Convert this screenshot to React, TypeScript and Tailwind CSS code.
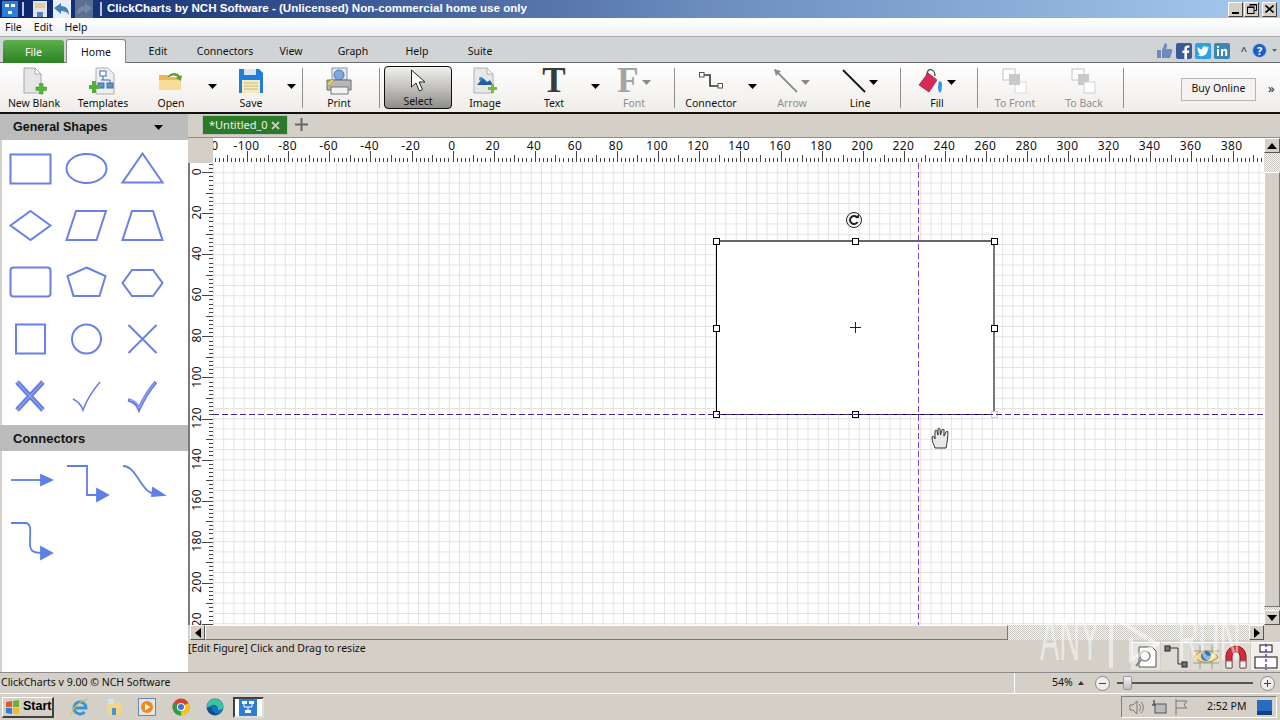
import React from 'react';

// Small toolbar glyphs
const Caret = ({ muted = false }: { muted?: boolean }) => (
  <svg width="9" height="5" viewBox="0 0 9 5">
    <path d="M0 0h9L4.500 5z" fill={muted ? '#8a8a8a' : '#000'} />
  </svg>
);

const IconDoc = () => (
  <svg width="26" height="28" viewBox="0 0 26 28">
    <path d="M3 1h11l6 6v19H3z" fill="#e6e6e6" stroke="#a8a8a8" />
    <path d="M14 1v6h6z" fill="#fff" stroke="#a8a8a8" />
    <path d="M15 20h3.500v-3.500h3.500V20h3.500v3.500H22V27h-3.500v-3.500H15z" fill="#55b53a" stroke="#2e8a1d" strokeWidth="0.5" />
  </svg>
);

const IconTemplates = () => (
  <svg width="28" height="28" viewBox="0 0 28 28">
    <path d="M7 1h12l6 6v20H7z" fill="#eee" stroke="#b0b0b0" />
    <rect x="11" y="4" width="6" height="5" fill="#fff" stroke="#3f6fa8" />
    <rect x="9" y="16" width="6" height="5" fill="#5d93c9" stroke="#3f6fa8" />
    <rect x="18" y="16" width="6" height="5" fill="#5d93c9" stroke="#3f6fa8" />
    <path d="M14 9v4M12 13h9v3" fill="none" stroke="#3f6fa8" />
    <path d="M0 18h3v-4h4v4h3v4H7v4H3v-4H0z" fill="#4fb035" />
  </svg>
);

const IconOpen = () => (
  <svg width="26" height="22" viewBox="0 0 26 22">
    <path d="M1 5h8l2 2h12v13H1z" fill="#eeb755" />
    <path d="M1 10h22v10H1z" fill="#f9dc97" />
    <path d="M9 7c4-5 10-5 13-1l2-1-1 6-5-3 2-1c-3-2-6-2-9 0z" fill="#5e9e2b" />
  </svg>
);

const IconSave = () => (
  <svg width="24" height="24" viewBox="0 0 24 24">
    <path d="M0 0h20l4 4v20H0z" fill="#1f7fd8" />
    <rect x="5" y="0" width="12" height="6" fill="#d6e7f7" />
    <rect x="3" y="11" width="18" height="13" fill="#f7e9bd" />
    <path d="M5 14h14M5 17h14M5 20h14" stroke="#c9b98a" />
  </svg>
);

const IconPrint = () => (
  <svg width="26" height="28" viewBox="0 0 26 28">
    <rect x="6" y="1" width="15" height="12" fill="#e4e8f0" stroke="#8a93a5" />
    <circle cx="13" cy="8" r="5" fill="#7ea8dc" stroke="#4e76ad" />
    <path d="M1 13h24v10H1z" fill="#b7b7b7" stroke="#6d6d6d" />
    <rect x="5" y="20" width="17" height="7" fill="#f3f3f3" stroke="#777" />
    <path d="M1 17l5-5 2 2-5 5z" fill="#e8d25a" stroke="#a08f2e" strokeWidth="0.5" />
  </svg>
);

const IconPointer = () => (
  <svg width="16" height="24" viewBox="0 0 16 24">
    <path d="M1.500 1v17l4.500-4 3.500 8 3-1.500-3.500-7.500h6z" fill="#fff" stroke="#222" strokeWidth="1" />
  </svg>
);

const IconImage = () => (
  <svg width="26" height="28" viewBox="0 0 26 28">
    <path d="M2 1h13l6 6v19H2z" fill="#e8e8e8" stroke="#b0b0b0" />
    <path d="M15 1v6h6z" fill="#fff" stroke="#b0b0b0" />
    <path d="M5 18l6-7 4 4 3-2 3 5z" fill="#1f5fa8" />
    <circle cx="9" cy="12" r="2" fill="#3b86d0" />
    <path d="M16 20h3v-3h3v3h3v3h-3v3h-3v-3h-3z" fill="#6fc238" />
  </svg>
);

const IconSerif = ({ letter, disabled }: { letter: string; disabled?: boolean }) => (
  <span
    className={`block h-[28px] overflow-hidden font-['Liberation_Serif',serif] font-bold text-[35px] leading-[28px] ${disabled ? 'text-[#a4a4a4]' : 'text-[#3a3a3a]'}`}
  >
    {letter}
  </span>
);

const IconConnector = () => (
  <svg width="26" height="22" viewBox="0 0 26 22">
    <path d="M6 5h6v11h8" fill="none" stroke="#333" strokeWidth="1.600" />
    <rect x="1.500" y="2.500" width="4.500" height="4.500" fill="#fff" stroke="#555" />
    <rect x="20" y="13.500" width="4.500" height="4.500" fill="#fff" stroke="#555" />
  </svg>
);

const IconLine = ({ color, head }: { color: string; head?: boolean }) => (
  <svg width="24" height="24" viewBox="0 0 24 24">
    <path d="M1 1l22 22" stroke={color} strokeWidth="1.800" />
    {head && <path d="M0 0l7 2-5 5z" fill={color} />}
  </svg>
);

const IconFill = () => (
  <svg width="26" height="26" viewBox="0 0 26 26">
    <path d="M9 8c-1-9 8-8 8 0" fill="none" stroke="#555" strokeWidth="1.500" />
    <path d="M10 5l9 7-8 12-10-7z" fill="#d62a58" stroke="#8d1537" strokeWidth="0.7" />
    <path d="M21 13c2 0 3 1 3 4 0 4-1 7-2 8-2-2-2-4-2-7z" fill="#2a9be0" />
  </svg>
);

const IconStack = ({ back }: { back?: boolean }) => (
  <svg width="26" height="26" viewBox="0 0 26 26">
    <rect x="1" y="1" width="12" height="11" fill="#fff" stroke="#c4c4c4" />
    {back ? (
      <>
        <rect x="7" y="6" width="11" height="11" fill="#c9c9c9" />
        <rect x="13" y="14" width="11" height="11" fill="#fff" stroke="#cfcfcf" />
      </>
    ) : (
      <>
        <rect x="13" y="14" width="11" height="11" fill="#fff" stroke="#dadada" />
        <rect x="7" y="6" width="11" height="11" fill="#c9c9c9" />
      </>
    )}
  </svg>
);

interface ToolItem {
  label?: string;
  icon?: React.ReactNode;
  width: string;
  disabled?: boolean;
  kind?: 'tool' | 'caret' | 'sep';
  inlineCaret?: boolean;
  active?: boolean;
}

const tools: ToolItem[] = [
  { label: 'New Blank', icon: <IconDoc />, width: 'w-[68px]' },
  { label: 'Templates', icon: <IconTemplates />, width: 'w-[70px]' },
  { label: 'Open', icon: <IconOpen />, width: 'w-[66px]' },
  { kind: 'caret', width: 'w-[16px]' },
  { label: 'Save', icon: <IconSave />, width: 'w-[62px]' },
  { kind: 'caret', width: 'w-[19px]' },
  { kind: 'sep', width: 'w-[3px]' },
  { label: 'Print', icon: <IconPrint />, width: 'w-[70px]' },
  { kind: 'sep', width: 'w-[10px]' },
  { label: 'Select', icon: <IconPointer />, width: 'w-[68px]', active: true },
  { label: 'Image', icon: <IconImage />, width: 'w-[66px]' },
  { label: 'Text', icon: <IconSerif letter="T" />, width: 'w-[72px]' },
  { kind: 'caret', width: 'w-[10px]' },
  { label: 'Font', icon: <IconSerif letter="F" disabled />, width: 'w-[68px]', disabled: true, inlineCaret: true },
  { kind: 'sep', width: 'w-[12px]' },
  { label: 'Connector', icon: <IconConnector />, width: 'w-[62px]' },
  { kind: 'caret', width: 'w-[20px]' },
  { label: 'Arrow', icon: <IconLine color="#8d8d8d" head />, width: 'w-[60px]', disabled: true, inlineCaret: true },
  { label: 'Line', icon: <IconLine color="#111" />, width: 'w-[76px]', inlineCaret: true },
  { kind: 'sep', width: 'w-[5px]' },
  { label: 'Fill', icon: <IconFill />, width: 'w-[68px]', inlineCaret: true },
  { kind: 'sep', width: 'w-[12px]' },
  { label: 'To Front', icon: <IconStack />, width: 'w-[64px]', disabled: true },
  { label: 'To Back', icon: <IconStack back />, width: 'w-[74px]', disabled: true },
  { kind: 'sep', width: 'w-[5px]' },
];

const tabs = [
  { label: 'Edit', width: 'w-[64px]' },
  { label: 'Connectors', width: 'w-[70px]' },
  { label: 'View', width: 'w-[62px]' },
  { label: 'Graph', width: 'w-[62px]' },
  { label: 'Help', width: 'w-[66px]' },
  { label: 'Suite', width: 'w-[60px]' },
];

const hLabels = [-120, -100, -80, -60, -40, -20, 0, 20, 40, 60, 80, 100, 120, 140, 160, 180, 200, 220, 240, 260, 280, 300, 320, 340, 360, 380];
const vLabels = [0, 20, 40, 60, 80, 100, 120, 140, 160, 180, 200, 220];

const STEP = 4.105;

const HRuler = () => (
  <div className="relative h-[25px] bg-white overflow-hidden flex-none">
    <div className="flex -ml-[28px] text-[12px] leading-[14px] pt-[1px] text-[#111] tracking-[0.4px]">
      {hLabels.map(n => (
        <div key={n} className="w-[41.05px] flex-none flex justify-center">
          {n}
        </div>
      ))}
    </div>
    <svg className="absolute left-0 bottom-[1px]" width="1052" height="12">
      {Array.from({ length: 257 }, (_, i) => {
        const h = i % 10 === 8 ? 11 : i % 10 === 3 ? 7 : 4;
        const x = Math.round(i * STEP + 1.5) + 0.5;
        return <line key={i} x1={x} x2={x} y1={12 - h} y2={12} stroke="#444" />;
      })}
    </svg>
  </div>
);

const VRuler = () => (
  <div className="relative w-[23px] h-full bg-white overflow-hidden flex-none">
    <div className="flex flex-col -mt-[12px] text-[12px] text-[#111] tracking-[0.4px]">
      {vLabels.map(n => (
        <div key={n} className="h-[41.05px] flex-none flex items-center justify-start">
          <span className="[writing-mode:vertical-rl] rotate-180 leading-[14px]">{n}</span>
        </div>
      ))}
    </div>
    <svg className="absolute right-0 top-0" width="12" height="462">
      {Array.from({ length: 113 }, (_, i) => {
        const w = i % 10 === 2 ? 11 : i % 5 === 2 ? 7 : 4;
        const y = Math.round(i * STEP + 1) + 0.5;
        return <line key={i} x1={12 - w} x2={12} y1={y} y2={y} stroke="#444" />;
      })}
    </svg>
  </div>
);

const Handle = ({ className }: { className: string }) => (
  <div className={`absolute w-[7px] h-[7px] bg-white border border-black ${className}`} />
);

const SHAPE = '#6a80e4';

const ShapePalette = () => (
  <svg width="188" height="285" viewBox="0 1 188 285" fill="none" stroke={SHAPE} strokeWidth="2">
    <rect x="10.500" y="15.500" width="40" height="29" />
    <ellipse cx="86.500" cy="29.500" rx="20" ry="14.500" />
    <path d="M142.500 14.500l20 29h-40z" />
    <path d="M30.500 72l20 14.500-20 14.500-20-14.500z" />
    <path d="M76 72h30l-9.500 29h-30z" />
    <path d="M132 72h21l9.500 29h-40z" />
    <rect x="10.500" y="128.500" width="40" height="29" rx="3" />
    <path d="M86.500 128.500l19 8.500-6 20H73.500l-6-20z" />
    <path d="M132 131h21l9.500 13-9.500 13h-21l-9.500-13z" />
    <rect x="16" y="185.500" width="29" height="29" />
    <circle cx="86.500" cy="200" r="14.500" />
    <path d="M128.500 186l28 28M156.500 186l-28 28" />
    <path d="M17 243l26 28M43 243l-26 28" strokeWidth="5" />
    <path d="M17 243l26 28M43 243l-26 28" stroke="#9fb0ef" strokeWidth="1" />
    <path d="M73 260c4 2 8 5 10 11 4-11 10-20 17-28" strokeWidth="1.600" />
    <path d="M128 261c5 1 9 4 11 9 5-11 10-19 17-27" strokeWidth="3.500" />
    <path d="M130 261c5 1 8 4 9 8 5-10 10-18 16-25" stroke="#9fb0ef" strokeWidth="1" />
  </svg>
);

const ConnectorPalette = () => (
  <svg width="188" height="120" viewBox="0 0 188 120" fill="none" stroke="#5f7fe8" strokeWidth="1.800">
    <path d="M11 29h32" />
    <path d="M41 24l11 5-11 5z" fill="#5f7fe8" />
    <path d="M67 15h20v29h12" />
    <path d="M97 38l11 6-11 6z" fill="#5f7fe8" />
    <path d="M123 15c14 0 17 26 32 28" />
    <path d="M153 37l11 7-12 1z" fill="#5f7fe8" />
    <path d="M11 72h14c7 0 5 8 5 20 0 8 2 10 14 10" />
    <path d="M41 96l11 6-11 6z" fill="#5f7fe8" />
  </svg>
);

const ArrowBtn = ({ dir, className = '' }: { dir: 'u' | 'd' | 'l' | 'r'; className?: string }) => {
  const d = { u: 'M0 6L5 0l5 6z', d: 'M0 0h10L5 6z', l: 'M6 0v10L0 5z', r: 'M0 0v10l6-5z' }[dir];
  const box = dir === 'u' || dir === 'd' ? '0 0 10 6' : '0 0 6 10';
  return (
    <div
      className={`flex items-center justify-center bg-[#d4d0c8] border-t border-l border-t-white border-l-white border-r border-b border-r-[#555] border-b-[#555] ${className}`}
    >
      <svg width={dir === 'u' || dir === 'd' ? 10 : 6} height={dir === 'u' || dir === 'd' ? 6 : 10} viewBox={box}>
        <path d={d} fill="#000" />
      </svg>
    </div>
  );
};

const DITHER =
  '[background-image:repeating-conic-gradient(#c8c6c0_0_25%,#f6f6f3_0_50%)] [background-size:2px_2px]';

const Canvas = () => (
  <div className="relative flex-1 overflow-hidden bg-white [background-image:linear-gradient(#e2e2e2_1px,transparent_1px),linear-gradient(90deg,#e2e2e2_1px,transparent_1px)] [background-size:10.26px_10.26px] [background-position:0px_-1px]">
    {/* selected rectangle */}
    <div className="absolute left-[503px] top-[77px] w-[279px] h-[175px] bg-white border-l border-t-2 border-r-2 border-b border-l-black border-t-[#666] border-r-[#777] border-b-black" />
    <Handle className="left-[500px] top-[75px]" />
    <Handle className="left-[639px] top-[75px]" />
    <Handle className="left-[778px] top-[75px]" />
    <Handle className="left-[500px] top-[162px]" />
    <Handle className="left-[778px] top-[162px]" />
    <Handle className="left-[500px] top-[248px]" />
    <Handle className="left-[639px] top-[248px]" />
    <div className="absolute left-[778px] top-[248px] w-[7px] h-[7px] bg-white border border-[#f0d070]" />
    {/* guides */}
    <div className="absolute left-[705px] top-0 bottom-0 w-[1px] [background-image:linear-gradient(#7d45d0_0_6px,transparent_6px_9px)] [background-size:1px_9px]" />
    <div className="absolute left-0 right-0 top-[251px] h-[1px] [background-image:linear-gradient(90deg,#4a2298_0_6px,transparent_6px_9px)] [background-size:9px_1px]" />
    {/* centre cross, rotate handle, hand cursor */}
    <svg className="absolute left-[636px] top-[158px]" width="13" height="13">
      <path d="M6.500 1v11M1 6.500h11" stroke="#222" />
    </svg>
    <svg className="absolute left-[632px] top-[48px]" width="18" height="18" viewBox="0 0 18 18" fill="none" stroke="#222">
      <circle cx="9" cy="9" r="7.500" />
      <path d="M12.500 7a4 4 0 1 0 0 4" strokeWidth="2" />
      <path d="M10 7h4V3z" fill="#222" stroke="none" />
    </svg>
    <svg className="absolute left-[718px] top-[263px]" width="20" height="24" viewBox="0 0 20 24">
      <path
        d="M4 22c-1-3-3-6-3-11 0-1 2-1 2 0l1 2V5c0-1 2-1 2 0l1 4V3c0-1 2-1 2 0l.5 6L11 4c0-1 2-1 2 0l0 6 2-4c0-1 2-1 2 0 0 4-1 12-2 16z"
        fill="#e8e8e8"
        stroke="#333"
      />
    </svg>
  </div>
);

const TinyIcons = () => (
  <div className="flex items-center gap-[1px]">
    <div className="w-[29px] h-[28px] bg-[#e6e4df] flex items-center justify-center border-t border-white">
      <svg width="24" height="24" viewBox="0 0 24 24" fill="none">
        <path d="M5 2h13l4 4v16H5z" fill="#fff" stroke="#555" />
        <circle cx="11" cy="11" r="5" stroke="#888" strokeWidth="1.500" />
        <path d="M7 15l-5 6" stroke="#888" strokeWidth="2" />
      </svg>
    </div>
    <div className="w-[29px] h-[28px] bg-[#dedbd4] flex items-center justify-center border-t border-white">
      <svg width="26" height="24" viewBox="0 0 26 24" fill="none">
        <rect x="2" y="1" width="5" height="5" fill="#777" stroke="#222" />
        <rect x="19" y="17" width="5" height="5" fill="#777" stroke="#222" />
        <path d="M7 3h8v16h4" stroke="#333" />
      </svg>
    </div>
    <div className="w-[29px] h-[28px] bg-[#dedbd4] flex items-center justify-center border-t border-white">
      <svg width="26" height="24" viewBox="0 0 26 24" fill="none">
        <path d="M7 0v24M19 0v24M0 6h26M0 18h26" stroke="#9b9b8e" />
        <path d="M1 12c6-8 18-8 24 0-6 7-18 7-24 0z" fill="#f2dc88" stroke="#b08b30" />
        <circle cx="13" cy="11" r="5" fill="#2f6fc0" />
      </svg>
    </div>
    <div className="w-[29px] h-[28px] bg-[#dedbd4] flex items-center justify-center border-t border-white">
      <svg width="26" height="24" viewBox="0 0 26 24" fill="none">
        <path d="M3 23V11a10 10 0 0 1 20 0v12h-6V11a4 4 0 0 0-8 0v12z" fill="#d02c3a" stroke="#8e1a24" />
        <path d="M3 16h6v7H3zM17 16h6v7h-6z" fill="#eee" stroke="#777" />
      </svg>
    </div>
    <div className="w-[29px] h-[28px] bg-[#f1efea] flex items-center justify-center border-t border-white">
      <svg width="26" height="26" viewBox="0 0 26 26" fill="none">
        <rect x="7" y="1" width="12" height="7" fill="#fff" stroke="#111" />
        <rect x="2" y="13" width="22" height="11" fill="#fff" stroke="#111" />
        <path d="M13 0v26" stroke="#5b3bc4" strokeWidth="1.500" strokeDasharray="3 2" />
      </svg>
    </div>
  </div>
);

const TaskIcon = ({ children }: { children: React.ReactNode }) => (
  <div className="w-[33.800px] h-[24px] flex items-center justify-center flex-none">{children}</div>
);

const WinBtn = ({ children }: { children: React.ReactNode }) => (
  <div className="w-[15px] h-[15px] bg-[#d4d0c8] border-t border-l border-white border-r border-b border-r-[#404040] border-b-[#404040] flex items-center justify-center">
    {children}
  </div>
);

const App = () => {
  return (
    <div className="relative w-[1280px] h-[720px] overflow-hidden flex flex-col bg-[#d4d0c8] text-black text-[10.500px] font-['Noto_Sans','Liberation_Sans',sans-serif]">
      {/* title bar */}
      <div className="h-[18px] flex-none flex items-center bg-[linear-gradient(90deg,#0a246a,#6b8cbd_55%,#a6caf0)] text-white">
        <svg className="ml-[2px]" width="16" height="16" viewBox="0 0 16 16">
          <rect width="16" height="16" fill="#2d7fd3" />
          <path d="M3 3h4v3H3zM9 3h4v3H9zM6 10h4v3H6z" fill="#fff" />
        </svg>
        <div className="w-[2px] h-[14px] bg-[#b9c7de] ml-[4px]" />
        <svg className="ml-[8px]" width="16" height="18" viewBox="0 0 16 18">
          <rect x="1" y="1" width="14" height="16" fill="#dce6f2" />
          <rect x="3" y="3" width="10" height="5" fill="#f2c888" />
          <rect x="5" y="12" width="6" height="5" fill="#5a7fb0" />
        </svg>
        <div className="ml-[5px] w-[18px] h-[18px] bg-[#e8eef6] flex items-center justify-center">
          <svg width="18" height="14" viewBox="0 0 18 14">
            <path d="M1 6l7-5v3c5 0 8 3 8 9-2-3-4-4-8-4v3z" fill="#4a80b5" />
          </svg>
        </div>
        <div className="ml-[4px] w-[18px] h-[18px] bg-[#5a6f93] flex items-center justify-center">
          <svg width="18" height="14" viewBox="0 0 18 14">
            <path d="M17 6l-7-5v3C5 4 2 7 2 13c2-3 4-4 8-4v3z" fill="#7488a8" />
          </svg>
        </div>
        <div className="w-[2px] h-[14px] bg-[#b9c7de] ml-[7px]" />
        <span className="ml-[5px] -mt-[2px] font-bold text-[11.600px] leading-[18px] font-['Liberation_Sans',sans-serif]">
          ClickCharts by NCH Software - (Unlicensed) Non-commercial home use only
        </span>
        <div className="ml-auto mr-[3px] flex gap-[1px]">
          <WinBtn>
            <div className="w-[7px] h-[2px] bg-black mt-[7px] -ml-[1px]" />
          </WinBtn>
          <div className="mr-[2px]">
            <WinBtn>
              <svg width="10" height="10" viewBox="0 0 10 10" fill="none" stroke="#000">
                <path d="M3 2.500V.5h6.500v6H7.500" />
                <rect x="0.500" y="3" width="6.500" height="6.500" />
                <path d="M0.500 3.500h6.500M3 1h6.500" />
              </svg>
            </WinBtn>
          </div>
          <WinBtn>
            <svg width="9" height="8" viewBox="0 0 9 8" stroke="#000" strokeWidth="1.600">
              <path d="M.5.5l8 7M8.500.5l-8 7" />
            </svg>
          </WinBtn>
        </div>
      </div>

      {/* menu bar */}
      <div className="h-[19px] flex-none flex items-center gap-[12px] pl-[5px] pt-[2px] bg-[linear-gradient(#ffffff,#eef0f1)] border-b border-[#a9a9a9] text-[#111]">
        <span>File</span>
        <span>Edit</span>
        <span>Help</span>
      </div>

      {/* ribbon tabs */}
      <div className="h-[26px] flex-none flex items-end bg-[#d0d4d7] border-b border-[#6e6e6e] pl-[3px]">
        <div className="w-[61px] h-[23px] -mb-[1px] pt-[2px] rounded-t-[3px] bg-[linear-gradient(#5cb04c,#2c8323)] text-white flex items-center justify-center">
          File
        </div>
        <div className="ml-[2px] w-[60px] h-[24px] -mb-[1px] pt-[2px] rounded-t-[3px] bg-white border border-b-0 border-[#8a8a8a] flex items-center justify-center text-[#111]">
          Home
        </div>
        <div className="flex h-[23px] pt-[2px] items-center text-[#111]">
          {tabs.map(t => (
            <div key={t.label} className={`${t.width} flex justify-center`}>
              {t.label}
            </div>
          ))}
        </div>
        <div className="ml-auto h-[23px] flex items-center gap-[3px] pr-[3px]">
          <svg width="17" height="17" viewBox="0 0 17 17">
            <path d="M1 8h4v8H1zM6 8l3-7c2 0 2 2 2 3l-1 3h5c2 0 1 3 1 3l-2 6H6z" fill="#6f8bbd" />
          </svg>
          <svg width="16" height="16" viewBox="0 0 16 16">
            <rect width="16" height="16" rx="2" fill="#3b5a99" />
            <path d="M11 16v-6h2l.3-2.500H11V6c0-.8.300-1.200 1.200-1.200h1.200V2.600C13 2.500 12.300 2.500 11.500 2.500 9.700 2.500 8.400 3.600 8.400 5.700V7.500H6.300V10h2.100v6z" fill="#fff" />
          </svg>
          <svg width="16" height="16" viewBox="0 0 16 16">
            <rect width="16" height="16" rx="2" fill="#2ba3e3" />
            <path d="M13.500 4.500c-.5.200-1 .4-1.500.4.500-.3 1-.8 1.100-1.400-.5.300-1 .5-1.600.6a2.500 2.500 0 0 0-4.300 2.300C5.700 6.300 4 5.400 2.800 3.900c-.7 1.100-.300 2.600.8 3.300-.4 0-.8-.1-1.100-.3 0 1.200.8 2.200 2 2.500-.4.100-.8.100-1.100 0 .3 1 1.300 1.700 2.300 1.700-1 .8-2.400 1.200-3.700 1 3.800 2.400 10.800.9 10.800-6.400.6-.3 1.200-.8 1.700-1.200z" fill="#fff" />
          </svg>
          <svg width="16" height="16" viewBox="0 0 16 16">
            <rect width="16" height="16" rx="2" fill="#3b87b8" />
            <path d="M3 6h2v7H3zM3 3h2v2H3zM7 6h2v1c.5-.8 1.200-1.200 2-1.200 1.600 0 2.200 1 2.200 2.700V13h-2V9c0-.8-.3-1.300-1-1.300S9 8.200 9 9v4H7z" fill="#fff" />
          </svg>
          <span className="ml-[8px] text-[#222] text-[11px] leading-none">^</span>
          <div className="ml-[2px] w-[15px] h-[15px] rounded-full bg-[#1d5fc2] text-white text-[11px] font-bold leading-[13px] text-center border border-[#b8d0ee]">
            ?
          </div>
          <svg className="ml-[2px]" width="5" height="3" viewBox="0 0 5 3">
            <path d="M0 0h5L2.500 3z" fill="#666" />
          </svg>
        </div>
      </div>

      {/* ribbon */}
      <div className="h-[51px] flex-none flex items-stretch bg-[linear-gradient(#ffffff,#f0ede9)] border-b-2 border-[#111] pr-[1px]">
        {tools.map((tool, i) => {
          if (tool.kind === 'sep') {
            return (
              <div key={i} className={`${tool.width} flex-none flex justify-center items-center`}>
                <div className="w-[1px] h-[40px] bg-[#8f8f8f]" />
              </div>
            );
          }
          if (tool.kind === 'caret') {
            return (
              <div key={i} className={`${tool.width} flex-none flex justify-center items-center pb-[2px]`}>
                <Caret />
              </div>
            );
          }
          return (
            <div
              key={i}
              className={`${tool.width} flex-none flex flex-col items-center justify-between ${
                tool.active
                  ? 'my-[3px] pt-[1px] rounded-[4px] border border-[#111] bg-[linear-gradient(#f2f1ef,#b9b7b3_60%,#8f8d8a)]'
                  : 'pt-[4px] pb-[2px]'
              } ${tool.disabled ? 'text-[#8e8e8e]' : 'text-[#111]'}`}
            >
              <div className="relative h-[28px] flex items-center justify-center">
                {tool.icon}
                {tool.inlineCaret && (
                  <div className="ml-[3px] mt-[3px]">
                    <Caret muted={tool.disabled} />
                  </div>
                )}
              </div>
              <span className="leading-[14px] whitespace-nowrap">{tool.label}</span>
            </div>
          );
        })}
        <div className="ml-[55px] self-center mt-[3px] w-[75px] h-[23px] border border-[#b5b5b5] bg-[#f4f3f1] flex items-center justify-center text-[#111] flex-none">
          Buy Online
        </div>
        <div className="ml-[12px] self-center mt-[3px] text-[13px] text-[#222]">»</div>
      </div>

      {/* main area */}
      <div className="flex-1 min-h-0 flex">
        {/* shapes sidebar */}
        <div className="w-[188px] flex-none flex flex-col pl-[2px] bg-[#d4d0c8]">
          <div className="h-[26px] -ml-[2px] pt-[1px] flex-none bg-[#bcbcbc] flex items-center pl-[13px] pr-[25px] justify-between text-[12.500px] font-bold text-[#111] font-['Liberation_Sans',sans-serif]">
            General Shapes
            <Caret />
          </div>
          <div className="h-[285px] flex-none bg-white overflow-hidden">
            <div className="-ml-[2px]">
              <ShapePalette />
            </div>
          </div>
          <div className="h-[26px] -ml-[2px] pt-[1px] flex-none bg-[#bcbcbc] flex items-center pl-[13px] text-[13px] font-bold text-[#111] font-['Liberation_Sans',sans-serif]">
            Connectors
          </div>
          <div className="flex-1 bg-white overflow-hidden">
            <div className="-ml-[2px]">
              <ConnectorPalette />
            </div>
          </div>
        </div>

        {/* document column */}
        <div className="flex-1 min-w-0 flex flex-col">
          <div className="h-[23px] flex-none flex items-start pl-[14px] pt-[1px]">
            <div className="w-[86px] h-[20px] pt-[1px] bg-[#2a7a2a] text-[#f0f0f0] border border-[#bfbfbf] text-[11px] flex items-center pl-[6px] gap-[3px]">
              *Untitled_0
              <svg width="9" height="9" viewBox="0 0 9 9" stroke="#c9c9c9" strokeWidth="1.800">
                <path d="M1 1l7 7M8 1l-7 7" />
              </svg>
            </div>
            <svg className="ml-[7px] mt-[3px]" width="13" height="13" viewBox="0 0 13 13" stroke="#666" strokeWidth="2">
              <path d="M6.500 0v13M0 6.500h13" />
            </svg>
          </div>

          <div className="h-[488px] flex-none flex border-t border-[#8d8d8d]">
            <div className="flex-1 min-w-0 flex flex-col">
              <div className="flex flex-none">
                <div className="w-[25px] flex-none bg-[#d4d0c8]" />
                <div className="flex-1 min-w-0">
                  <HRuler />
                </div>
              </div>
              <div className="flex-1 min-h-0 flex">
                <div className="w-[2px] flex-none bg-[#7a7a7a]" />
                <VRuler />
                <Canvas />
              </div>
            </div>
            <div className="w-[16px] flex-none flex flex-col">
              <ArrowBtn dir="u" className="h-[15px] flex-none" />
              <div className={`h-[19px] flex-none ${DITHER}`} />
              <div className="flex-1 bg-[#d4d0c8] border-t border-l border-white border-r border-b border-r-[#777] border-b-[#777]" />
              <div className={`h-[3px] flex-none ${DITHER}`} />
              <ArrowBtn dir="d" className="h-[15px] flex-none" />
            </div>
          </div>

          <div className="h-[15px] flex-none flex pl-[2px] pr-[16px]">
            <ArrowBtn dir="l" className="w-[15px] flex-none" />
            <div className="w-[803px] flex-none bg-[#d4d0c8] border-t border-l border-white border-r border-b border-r-[#777] border-b-[#777]" />
            <div className={`flex-1 ${DITHER}`} />
            <ArrowBtn dir="r" className="w-[15px] flex-none" />
          </div>

          <div className="flex-1 min-h-0 flex justify-between text-[#111]">
            <span className="mt-[1px] leading-[14px]">[Edit Figure] Click and Drag to resize</span>
            <div className="self-start mt-[2px]">
              <TinyIcons />
            </div>
          </div>
        </div>
      </div>

      {/* status bar */}
      <div className="h-[21px] flex-none flex items-center border-t border-[#8d8d8d] text-[#111]">
        <span className="ml-[1px]">ClickCharts v 9.00 © NCH Software</span>
        <div className="ml-auto w-[266px] h-full flex items-center border-l border-white">
          <span className="ml-[37px] w-[22px]">54%</span>
          <svg className="ml-[4px]" width="6" height="4" viewBox="0 0 6 4">
            <path d="M0 4l3-4 3 4z" fill="#333" />
          </svg>
          <div className="ml-[11px] w-[15px] h-[15px] rounded-full border border-[#888] bg-[#eeeeee] flex items-center justify-center">
            <div className="w-[7px] h-[1px] bg-[#444]" />
          </div>
          <div className="relative ml-[7px] w-[136px] h-[2px] bg-[#555]">
            <div className="absolute left-[6px] -top-[6px] w-[9px] h-[14px] rounded-[2px] bg-[linear-gradient(#f4f4f4,#bdbdbd)] border border-[#999]" />
          </div>
          <div className="ml-[7px] w-[15px] h-[15px] rounded-full border border-[#888] bg-[#eeeeee] flex items-center justify-center relative">
            <div className="w-[7px] h-[1px] bg-[#444]" />
            <div className="absolute w-[1px] h-[7px] bg-[#444]" />
          </div>
        </div>
      </div>

      {/* taskbar */}
      <div className="h-[27px] flex-none border-t border-white flex items-center pl-[2px] pr-[3px]">
        <div className="w-[52px] h-[21px] flex items-center pl-[2px] gap-[3px] bg-[#d4d0c8] border-t border-l border-white border-r-2 border-b-2 border-r-[#404040] border-b-[#404040] font-bold text-[12.500px] font-['Liberation_Sans',sans-serif]">
          <svg width="15" height="14" viewBox="0 0 15 14">
            <path d="M1 2l6-1v6H1z" fill="#e2572b" />
            <path d="M8 1l6-1v7H8z" fill="#6fb02f" />
            <path d="M1 8h6v6l-6-1z" fill="#2f7fd0" />
            <path d="M8 8h6v6l-6-1z" fill="#eebb2d" />
          </svg>
          Start
        </div>
        <div className="ml-[9px] flex">
          <TaskIcon>
            <svg width="18" height="18" viewBox="0 0 18 18" fill="none">
              <path d="M4 10h11a6 6 0 1 0-1.500 4" stroke="#3a92d8" strokeWidth="3" />
              <path d="M1 16C0 12 8 3 17 1" stroke="#e6b93a" strokeWidth="1.200" />
            </svg>
          </TaskIcon>
          <TaskIcon>
            <svg width="18" height="18" viewBox="0 0 18 18">
              <path d="M2 5h14v12H2z" fill="#f0d68a" />
              <path d="M3 1h6v5H3z" fill="#cfe2f2" />
              <path d="M7 10h4v7H7z" fill="#4c93cf" />
            </svg>
          </TaskIcon>
          <TaskIcon>
            <svg width="18" height="18" viewBox="0 0 18 18">
              <rect x="0.500" y="0.500" width="17" height="17" fill="#dbe6f0" stroke="#6b89a8" />
              <circle cx="9" cy="9" r="6" fill="#f08a1d" />
              <path d="M7 5.500l5 3.500-5 3.500z" fill="#fff" />
            </svg>
          </TaskIcon>
          <TaskIcon>
            <svg width="18" height="18" viewBox="0 0 18 18">
              <circle cx="9" cy="9" r="8.500" fill="#d8412f" />
              <path d="M9 9L16.500 5A8.500 8.500 0 0 1 9 17.500z" fill="#f5c518" />
              <path d="M9 9L9 17.500A8.500 8.500 0 0 1 1.500 5z" fill="#2f9e44" />
              <circle cx="9" cy="9" r="4" fill="#fff" />
              <circle cx="9" cy="9" r="3" fill="#3b78d8" />
            </svg>
          </TaskIcon>
          <TaskIcon>
            <svg width="18" height="18" viewBox="0 0 18 18">
              <circle cx="9" cy="9" r="8.500" fill="#1a6fb5" />
              <path d="M1 9a8 8 0 0 1 16 0c0 2-2 3-5 3 1-4-3-6-6-5s-4 3-5 2z" fill="#38c7a0" />
              <path d="M5 9c0 4 4 7 8 7-5 3-11 0-12-6z" fill="#0e4f8c" />
            </svg>
          </TaskIcon>
        </div>
        <div className="ml-[1px] w-[31px] h-[21px] bg-white border-2 border-t-[#404040] border-l-[#404040] border-r-[#ddd] border-b-[#ddd] flex items-center justify-center">
          <svg width="18" height="17" viewBox="0 0 18 17">
            <rect width="18" height="17" fill="#2d7fd3" />
            <path d="M3 2h5v3H3zM10 2h5v3h-5zM6 11h6v3H6z" fill="#fff" />
            <path d="M5 5v3h8V5M9 8v3" stroke="#fff" fill="none" />
          </svg>
        </div>
        <div className="ml-auto w-[156px] h-[22px] flex items-center border border-t-[#808080] border-l-[#808080] border-r-white border-b-white pl-[7px] text-[#111]">
          <svg width="15" height="15" viewBox="0 0 15 15" fill="none" stroke="#777">
            <path d="M1 5h3l4-4v13l-4-4H1zM10 4c2 2 2 5 0 7M12 2c3 3 3 8 0 11" />
          </svg>
          <svg className="ml-[7px]" width="16" height="15" viewBox="0 0 16 15" fill="none" stroke="#555">
            <rect x="4" y="4" width="11" height="9" fill="#bbb" />
            <path d="M3 0v5M1 5h4" strokeWidth="1.500" />
          </svg>
          <svg className="ml-[7px]" width="15" height="16" viewBox="0 0 15 16" fill="none" stroke="#777">
            <path d="M2 0v16M2 2h11l-3 4 3 3H2" />
          </svg>
          <span className="ml-[18px] whitespace-nowrap">2:52 PM</span>
          <svg className="ml-[11px]" width="15" height="15" viewBox="0 0 15 15">
            <rect width="15" height="15" fill="#2a6cc4" />
            <rect y="11" width="15" height="4" fill="#123f7d" />
          </svg>
        </div>
      </div>

      {/* watermark */}
      <div className="absolute left-[1040px] top-[610px] h-[60px] flex items-center text-white/50 pointer-events-none font-['Liberation_Sans',sans-serif] text-[29px] leading-none">
        <span className="scale-y-[2.100]">ANY</span>
        <svg className="ml-[8px]" width="60" height="60" viewBox="0 0 60 60" fill="none" stroke="currentColor" strokeWidth="4">
          <path d="M3 58V6l46 28-26 16V28" />
        </svg>
        <span className="ml-[10px] scale-y-[2.100]">RUN</span>
      </div>
    </div>
  );
};

export default App;
